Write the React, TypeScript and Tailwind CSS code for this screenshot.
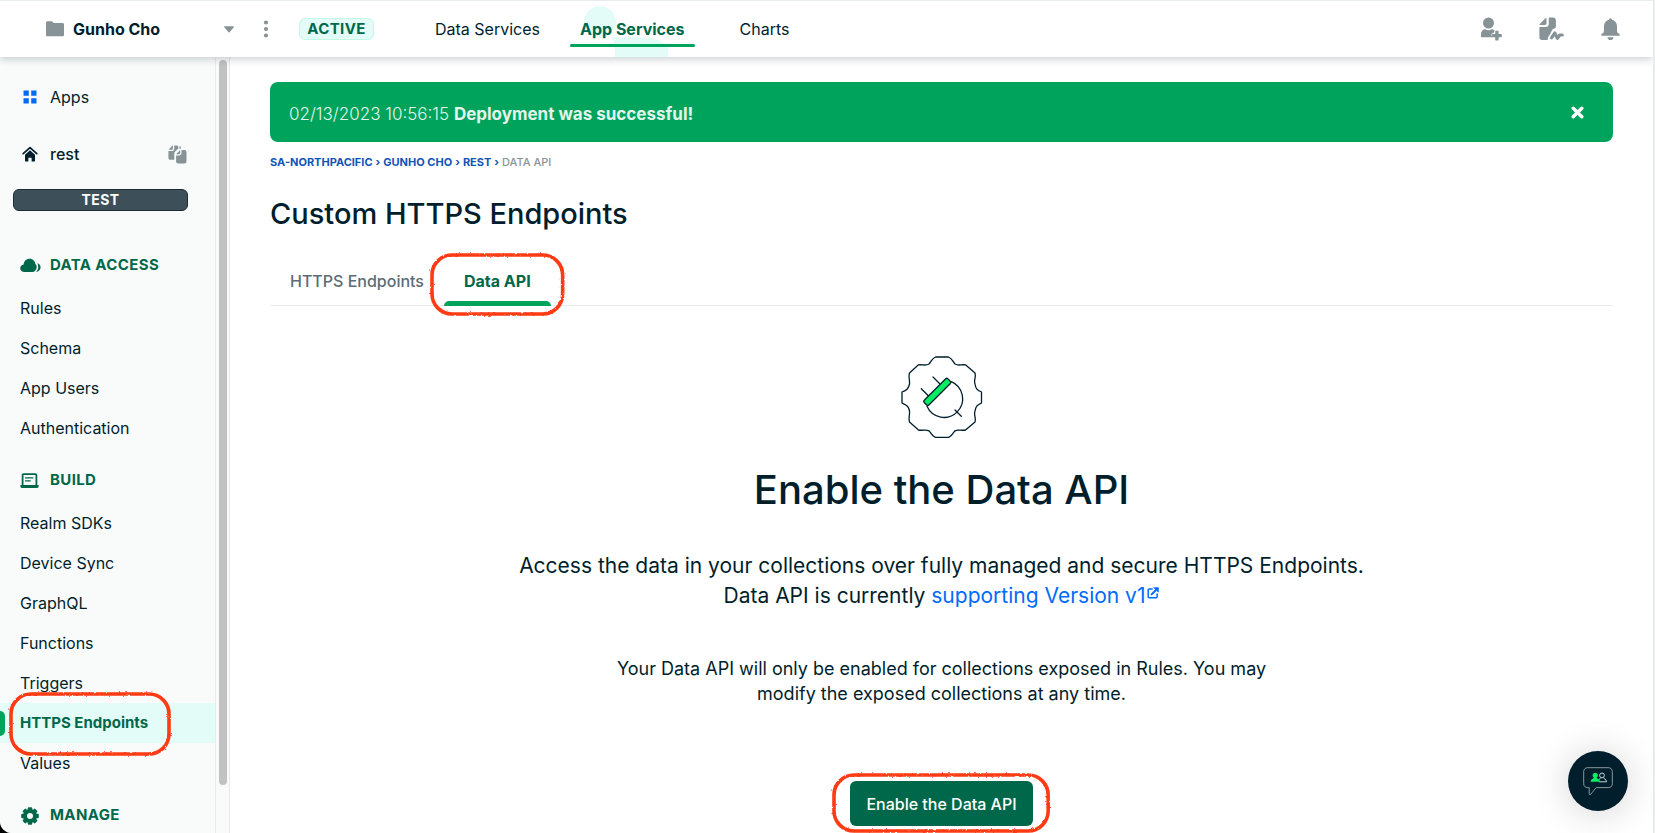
import React from "react";

const dataAccess = ["Rules", "Schema", "App Users", "Authentication"];
const build = [
  "Realm SDKs",
  "Device Sync",
  "GraphQL",
  "Functions",
  "Triggers",
  "HTTPS Endpoints",
  "Values",
];

function Highlight({ className, id }: { className: string; id: string }) {
  return (
    <span aria-hidden="true" className={`pointer-events-none absolute z-10 ${className}`}>
      <svg width="100%" height="100%" className="block overflow-visible">
        <filter id={id} x="-5%" y="-10%" width="110%" height="120%">
          <feTurbulence type="fractalNoise" baseFrequency="0.35" numOctaves="2" seed="4" />
          <feDisplacementMap in="SourceGraphic" scale="2.5" />
        </filter>
        <rect
          x="0"
          y="0"
          width="100%"
          height="100%"
          rx="20"
          fill="none"
          stroke="#ff3b14"
          strokeWidth="3.6"
          filter={`url(#${id})`}
        />
      </svg>
    </span>
  );
}

function FolderIcon() {
  return (
    <svg width="18" height="16" viewBox="0 0 18 16" fill="#889397" aria-hidden="true">
      <path d="M0 1.8C0 .9.7.3 1.5.3h4.2c.5 0 .9.2 1.1.6l.8 1.2h8.9c.8 0 1.5.6 1.5 1.4v10.4c0 .8-.7 1.4-1.5 1.4h-15C.7 15.3 0 14.7 0 13.9z" />
    </svg>
  );
}

function AppsIcon() {
  return (
    <svg width="14" height="14" viewBox="0 0 14 14" fill="#016bf8" aria-hidden="true">
      <path d="M.5.5h5.3v5.3H.5zM8.2.5h5.3v5.3H8.2zM.5 8.2h5.3v5.3H.5zM8.2 8.2h5.3v5.3H8.2z" />
    </svg>
  );
}

function HomeIcon() {
  return (
    <svg width="16" height="16" viewBox="0 0 16 16" aria-hidden="true">
      <path d="M1.2 7.7 8 1.6l6.800 6.100" fill="none" stroke="#001e2b" strokeWidth="1.7" strokeLinecap="round" strokeLinejoin="round" />
      <path d="M8 4.300 13 8.800v6c0 .4-.3.7-.7.7H9.600v-3.800H6.400v3.800H3.700c-.4 0-.7-.3-.7-.7v-6z" fill="#001e2b" />
    </svg>
  );
}

function CopyFilesIcon() {
  return (
    <svg width="19" height="19" viewBox="0 0 19 19" fill="#889397" aria-hidden="true">
      <path d="M4.900.6v3.200c0 .6-.4 1-1 1H.7c.1-.3.2-.5.5-.8L4.100 1c.2-.2.500-.3.800-.4z" />
      <path d="M6.200.5h2.500c.9 0 1.600.7 1.600 1.600v2c-.6.1-1.100.4-1.500.8L7.200 6.500c-.6.6-.9 1.300-.9 2.100v6.100H2.200c-1 0-1.800-.8-1.800-1.800V6.100H4.200c1.100 0 2-.9 2-2z" />
      <path d="M12.200 5.400v2.700c0 .6-.5 1.100-1.100 1.100H8.300c.1-.3.2-.6.500-.8l2.600-2.600c.2-.2.500-.4.800-.4z" />
      <path d="M13.500 4.900h3c1.100 0 2 .9 2 2v9.700c0 1.100-.9 2-2 2h-6.400c-1.100 0-2-.9-2-2v-6.100h3.200c1.200 0 2.200-1 2.200-2.200z" />
      <path d="M11.500.9c.7.2 1.300.9 1.400 1.700v1.100h-1.400z" />
    </svg>
  );
}

function CloudIcon() {
  return (
    <svg width="21" height="15" viewBox="0 0 21 15" fill="#00684a" aria-hidden="true">
      <path d="M4.600 14C2 14 .2 12.400.2 10.200c0-2 1.400-3.500 3.400-3.800C3.900 3.200 6.300.8 9.500.8c3 0 5.500 2.200 5.900 5.200.8.7 1.300 1.700 1.300 3 0 2.900-2 5-4.800 5z" />
      <path d="M17.300 5.300c1.900.5 3.300 1.900 3.300 4 0 2.700-1.900 4.600-4.700 4.700 1.500-1.200 2.300-2.900 2.300-5 0-1.400-.3-2.600-.9-3.700z" />
    </svg>
  );
}

function BuildIcon() {
  return (
    <svg width="19" height="16" viewBox="0 0 19 16" aria-hidden="true">
      <path d="M2.600 12V2.200c0-.6.4-1 1-1h11.800c.6 0 1 .4 1 1V12" fill="none" stroke="#00684a" strokeWidth="1.8" />
      <path d="M.4 12h18.200v1.600c0 .8-.6 1.400-1.400 1.400H1.800c-.8 0-1.400-.6-1.400-1.400z" fill="#00684a" />
      <path d="M5.600 4.900h7.300M5.600 7.900h4.600" stroke="#00684a" strokeWidth="1.3" strokeLinecap="round" />
    </svg>
  );
}

function GearIcon() {
  return (
    <svg width="19" height="18" viewBox="-10 -9 19 18" aria-hidden="true">
      <circle r="5" fill="none" stroke="#00684a" strokeWidth="4" />
      {[0, 45, 90, 135, 180, 225, 270, 315].map((a) => (
        <rect key={a} x="-2.200" y="-8.800" width="4.400" height="4" rx="1" fill="#00684a" transform={`rotate(${a})`} />
      ))}
    </svg>
  );
}

function InviteIcon() {
  return (
    <svg width="21" height="24" viewBox="0 0 21 24" fill="#889397" aria-hidden="true">
      <circle cx="7.500" cy="6" r="5.500" />
      <path d="M0 17.500c0-3 1.800-5.200 4.300-5.200 1 .7 2.100 1 3.200 1s2.200-.3 3.200-1c1.300 0 2.400.6 3.200 1.600-.7.3-1.100 1-1.100 1.800v.3h-.3c-1.200 0-2.100.9-2.100 2.100 0 1.100.7 2 1.700 2.100H1c-.6 0-1-.4-1-1z" />
      <path d="M14.900 13.800h2c.4 0 .7.3.7.7v2.400h2.500c.4 0 .7.3.7.7v1.900c0 .4-.3.7-.7.7h-2.500v2.500c0 .4-.3.7-.7.7h-2c-.4 0-.7-.3-.7-.7v-2.500h-2.500c-.4 0-.7-.3-.7-.7v-1.900c0-.4.3-.7.7-.7h2.500v-2.400c0-.4.3-.7.7-.7z" />
    </svg>
  );
}

function ActivityIcon() {
  return (
    <svg width="25" height="24" viewBox="0 0 25 24" fill="#889397" aria-hidden="true">
      <path d="M7.500.9v5.600c0 .8-.6 1.400-1.400 1.400H.5c.1-.5.3-.9.7-1.300L6.200 1.600c.4-.4.8-.6 1.300-.7z" />
      <path d="M9.800.5h4.300c1.600 0 2.800 1.200 2.800 2.800v7.200l-3.500 2-2.600 5.300-1.700 2.200-.4 3H2.900C1.500 23 .4 21.900.4 20.500V10h6.300c1.700 0 3.100-1.400 3.100-3.100z" />
      <path d="m12.500 20.800 3.300-4.800 2.600 5.400 2.300-3.400h2.600" fill="none" stroke="#889397" strokeWidth="3.2" strokeLinecap="round" strokeLinejoin="round" />
    </svg>
  );
}

function BellIcon() {
  return (
    <svg width="19" height="23" viewBox="0 0 19 23" fill="#889397" aria-hidden="true">
      <path d="M9.500.3c.8 0 1.400.6 1.400 1.400C14 2.400 16 4.900 16 8v4.500c0 1.500.6 2.500 2 3.300.6.3.9.7.9 1.200 0 .4-.3.7-.8.7H.9c-.5 0-.8-.3-.8-.7 0-.5.3-.9.9-1.200 1.400-.8 2-1.800 2-3.300V8c0-3.100 2-5.600 5.100-6.300 0-.8.6-1.400 1.400-1.400zM6.400 19.200h6.200c-.2 1.700-1.400 2.900-3.100 2.900s-2.900-1.200-3.100-2.900z" />
    </svg>
  );
}

function EndpointArt() {
  return (
    <svg width="82" height="82" viewBox="0 0 82 82" fill="none" stroke="#001e2b" strokeWidth="1.3" strokeLinejoin="round" strokeLinecap="round" aria-hidden="true">
      <path d="M34.500 1h13C51.500 2.500 51.500 5.500 54 8c3.500 2.200 6 .3 10.500.8L74 17c1.300 4.500-1.500 7 0 11 .8 4.500 1.500 6 6.500 8v11c-5 2.500-5.500 3-6.500 8-1.500 4 1.300 6.500 0 11l-9.500 8c-4.500 1-7-1-10.500.8-2.500 2.500-2.500 5-6.500 6.700h-13c-4-1.700-4-4.200-6.500-6.700-3.500-1.800-6 .2-10.500-.8L8.500 66c-1.300-4.500.5-7 0-11-1-5-2.500-5.500-7.500-8V36c5-2 6.500-3.500 7.500-8 .5-4-1.300-6.500 0-11l9-8.200c4.500-.5 7 1.400 10.500-.8 2.500-2.500 2.500-5.500 6.500-7z" />
      <path d="M50.300 25.700A18.600 18.600 0 1 1 26 50.300" />
      <path d="m20.300 32.700 7 7M32 21l7 7M54 54l6.300 6.300" />
      <rect x="-16.700" y="-3.300" width="33.400" height="6.600" rx="1.500" transform="translate(36.300 35.900) rotate(-45)" fill="#00ed64" />
    </svg>
  );
}

function ExternalIcon() {
  return (
    <svg width="12" height="12" viewBox="0 0 12 12" fill="none" stroke="#016bf8" strokeWidth="1.5" strokeLinecap="round" strokeLinejoin="round" className="ml-0.5 inline-block align-text-top mt-1" aria-hidden="true">
      <path d="M5.200 1.900H2.200c-.6 0-1 .4-1 1v6.900c0 .6.400 1 1 1h6.900c.6 0 1-.4 1-1V7" />
      <path d="m4.600 7.400 5.200-5.200" strokeWidth="2" />
      <path d="M7.200.7h4.100v4.100z" fill="#016bf8" strokeWidth=".8" />
    </svg>
  );
}

function ChatIcon() {
  return (
    <svg width="30" height="29" viewBox="0 0 30 29" fill="none" aria-hidden="true">
      <path d="M4.500.7h21c2.200 0 3.800 1.600 3.800 3.800v12.300c0 2.200-1.600 3.800-3.800 3.800H13.200L7.500 27.500c-.6.6-1.300.3-1.300-.5v-6.400H4.500c-2.200 0-3.800-1.600-3.800-3.800V4.500C.7 2.300 2.300.7 4.500.7z" stroke="#9aa5a9" strokeWidth=".9" />
      <g stroke="#dfe6e4" strokeWidth=".9">
        <circle cx="19" cy="8.400" r="2.400" />
        <path d="M17.500 10.800c-.3 1.300-1.500 1.400-2.300 2.300M20.500 10.800c.3 1.300 3 1 3 4h-7.600" />
      </g>
      <path d="M12.300 5.700a2.600 2.600 0 0 1 1.400 4.800c.1 1.500 3.100 1 3.100 4.300H7.700c0-3.300 3-2.800 3.100-4.300a2.600 2.600 0 0 1 1.500-4.800z" fill="#00ed64" />
    </svg>
  );
}

function SectionHeading({ icon, children }: { icon: React.ReactNode; children: string }) {
  return (
    <h2 className="flex h-[55px] items-center pt-[10px] pl-5 text-[15px] font-bold tracking-wide text-[#00684a]">
      <span className="flex w-[30px]">{icon}</span>
      {children}
    </h2>
  );
}

function NavItem({ label }: { label: string }) {
  const active = label === "HTTPS Endpoints";
  return (
    <li>
      <a
        href="#"
        aria-current={active ? "page" : undefined}
        className={
          active
            ? "relative flex h-10 items-center bg-[#e3fcf7] pl-5 text-[15px] font-bold text-[#00684a]"
            : "flex h-10 items-center pl-5 text-base"
        }
      >
        {active && <span className="absolute left-0 h-[25px] w-[5px] rounded-r-md bg-[#00a35c]" />}
        {label}
        {active && <Highlight id="rough-nav" className="-top-[9px] left-[11px] h-[60px] w-[158px]" />}
      </a>
    </li>
  );
}

export default function App() {
  return (
    <div className="h-screen overflow-hidden bg-black font-['Inter','Liberation_Sans',sans-serif] text-[#001e2b]">
      <div className="flex h-full flex-col overflow-hidden rounded-bl-xl border-t border-r-2 border-[#e8edeb] bg-white">
        <header className="relative z-20 flex h-14 shrink-0 items-center bg-white shadow-[0_3px_7px_rgba(0,30,43,0.18)]">
          <button className="ml-[46px] flex w-[188px] items-center text-base font-bold">
            <FolderIcon />
            <span className="ml-[9px]">Gunho Cho</span>
            <svg width="10" height="7" viewBox="0 0 10 7" className="ml-auto" aria-hidden="true">
              <path d="M.6.3h8.800c.5 0 .7.5.4.9L5.600 6.200c-.3.4-.8.4-1.100 0L.3 1.200C-.1.8.1.3.6.3z" fill="#889397" />
            </svg>
          </button>
          <button aria-label="Project options" className="ml-[29px] flex">
            <svg width="6" height="18" viewBox="0 0 6 18" fill="#889397" aria-hidden="true">
              <circle cx="3" cy="2.500" r="2.100" />
              <circle cx="3" cy="9" r="2.100" />
              <circle cx="3" cy="15.500" r="2.100" />
            </svg>
          </button>
          <span className="ml-[30px] flex h-[22px] w-[75px] items-center justify-center rounded-md border border-[#c0fae6] bg-[#e3fcf7] text-[15px] font-bold tracking-wide text-[#00684a]">
            ACTIVE
          </span>
          <nav className="relative ml-[51px] flex h-full items-center text-base">
            <a href="#" className="px-[10px]">Data Services</a>
            <a href="#" aria-current="page" className="relative ml-5 flex h-full items-center px-[10px] font-bold text-[#00684a]">
              <svg width="84" height="51" viewBox="0 0 84 51" className="absolute bottom-0 left-[14px]" fill="#e3fcf7" aria-hidden="true">
                <circle cx="16" cy="16" r="16" />
                <path d="M26 30c3 1.500 7 1.500 12 1.500h24c13 0 24 8 28 19.500H31V40c0-4-2-7-5-10z" />
              </svg>
              <span className="relative">App Services</span>
              <span className="absolute inset-x-0 top-[43px] h-[3px] rounded-full bg-[#00a35c]" />
            </a>
            <a href="#" className="ml-[35px] px-[10px]">Charts</a>
          </nav>
          <div className="mr-[33px] ml-auto flex items-center gap-[37px]">
            <button aria-label="Invite people"><InviteIcon /></button>
            <button aria-label="Activity feed"><ActivityIcon /></button>
            <button aria-label="Alerts"><BellIcon /></button>
          </div>
        </header>

        <div className="flex min-h-0 flex-1">
          <aside className="w-[216px] shrink-0 overflow-hidden border-r border-[#e8edeb] bg-[#f9fbfa]">
            <a href="#" className="mt-5 flex h-10 items-center pl-[23px] text-base">
              <span className="flex w-[27px]"><AppsIcon /></span>
              Apps
            </a>
            <div className="mt-[17px] flex h-10 items-center pr-7 pl-[22px] text-base font-medium">
              <span className="flex w-7"><HomeIcon /></span>
              rest
              <button aria-label="Copy app ID" className="ml-auto"><CopyFilesIcon /></button>
            </div>
            <div className="mt-[15px] mr-[27px] ml-[13px] flex h-[22px] items-center justify-center rounded-md border border-[#1c2d38] bg-[#3d4f58] text-sm font-bold tracking-wide text-white">
              TEST
            </div>
            <div className="mt-[22px]">
              <SectionHeading icon={<CloudIcon />}>DATA ACCESS</SectionHeading>
              <ul>{dataAccess.map((l) => <NavItem key={l} label={l} />)}</ul>
              <SectionHeading icon={<BuildIcon />}>BUILD</SectionHeading>
              <ul>{build.map((l) => <NavItem key={l} label={l} />)}</ul>
              <SectionHeading icon={<GearIcon />}>MANAGE</SectionHeading>
            </div>
          </aside>
          <div className="w-[14px] shrink-0 border-r border-[#e8e8e8] bg-[#fafafa] px-[3px] pt-[3px] pb-12">
            <div className="h-full w-2 rounded-full bg-[#c1c1c1]" />
          </div>

          <main className="min-w-0 flex-1 overflow-hidden px-10 pt-[25px]">
            <div role="status" className="flex h-[60px] items-center rounded-lg bg-[#00a35c] pr-[29px] pl-[19px] text-[17px] text-[#e3f5ea]">
              <p className="pt-1 leading-6"><span className="font-light">02/13/2023 10:56:15</span> <strong className="font-bold">Deployment was successful!</strong></p>
              <button aria-label="Dismiss" className="ml-auto">
                <svg width="13" height="13" viewBox="0 0 13 13" stroke="#fff" strokeWidth="3.4" strokeLinecap="round" aria-hidden="true">
                  <path d="m2.200 2.200 8.600 8.600M10.800 2.200l-8.600 8.600" />
                </svg>
              </button>
            </div>
            <nav aria-label="Breadcrumb" className="mt-3 flex h-4 items-center gap-[3px] text-[11px] font-bold text-[#1254b7]">
              <a href="#">SA-NORTHPACIFIC</a>
              <span>›</span>
              <a href="#">GUNHO CHO</a>
              <span>›</span>
              <a href="#">REST</a>
              <span>›</span>
              <span className="font-medium text-[#889397]">DATA API</span>
            </nav>
            <h1 className="mt-[24px] text-[29px] leading-10 font-medium">Custom HTTPS Endpoints</h1>
            <div role="tablist" className="mt-[23px] flex h-[49px] border-b border-[#e8edeb] text-base">
              <button role="tab" aria-selected="false" className="px-5 font-medium text-[#5c6c75]">HTTPS Endpoints</button>
              <button role="tab" aria-selected="true" className="relative px-5 font-bold text-[#00684a]">
                Data API
                <span className="absolute inset-x-0 -bottom-px h-[5px] rounded-t-md bg-[#00a35c]" />
                <Highlight id="rough-tab" className="-inset-x-3 -top-0.5 h-[59px]" />
              </button>
            </div>

            <section className="flex flex-col items-center text-center">
              <div className="mt-[50px]"><EndpointArt /></div>
              <h2 className="mt-7 text-[40px] leading-12 font-medium">Enable the Data API</h2>
              <p className="mt-[37px] text-[21px] leading-[30px]">
                Access the data in your collections over fully managed and secure HTTPS Endpoints.
                <br />
                Data API is currently{" "}
                <a href="#" className="text-[#016bf8]">supporting Version v1<ExternalIcon /></a>
              </p>
              <p className="mt-[45px] text-lg leading-[25px]">
                Your Data API will only be enabled for collections exposed in Rules. You may
                <br />
                modify the exposed collections at any time.
              </p>
              <button className="relative mt-[75px] h-[45px] rounded-md bg-[#00684a] px-4 text-base font-medium text-white">
                Enable the Data API
                <Highlight id="rough-cta" className="-top-1.5 -inset-x-4 h-14" />
              </button>
            </section>
          </main>
        </div>
      </div>
      <button aria-label="Open support chat" className="fixed right-[27px] bottom-[22px] z-30 flex h-15 w-15 items-center justify-center rounded-full bg-[#001e2b] shadow-[0_2px_36px_rgba(0,0,0,0.18)]">
        <ChatIcon />
      </button>
    </div>
  );
}
